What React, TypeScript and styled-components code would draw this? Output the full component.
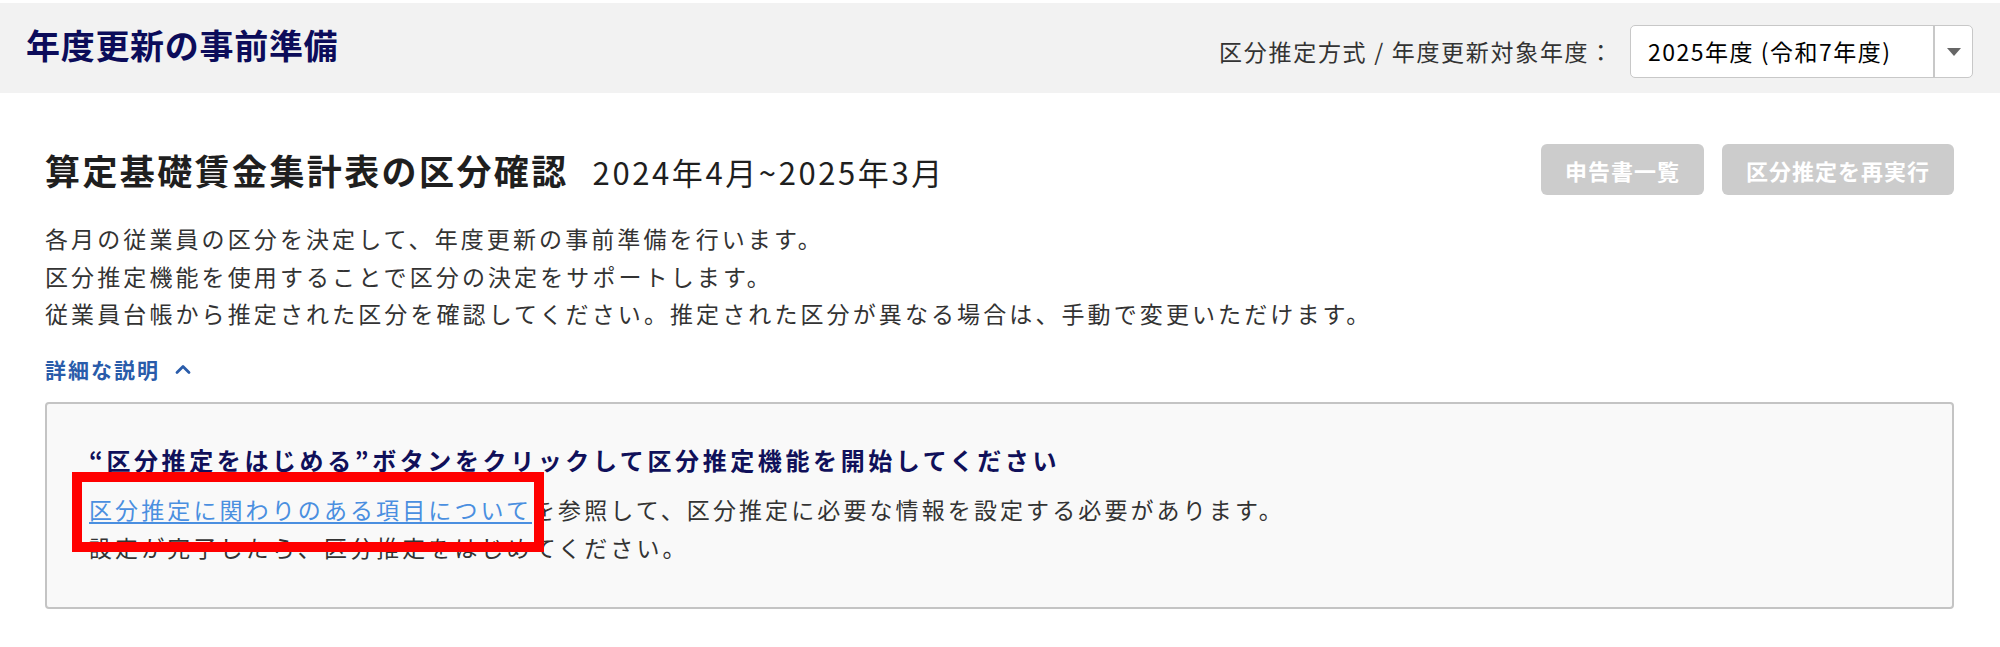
import React from "react";
import styled, { createGlobalStyle } from "styled-components";

const GlobalStyle = createGlobalStyle`
  body {
    margin: 0;
    background: #fff;
    font-family: "Noto Sans CJK JP", "Noto Sans", sans-serif;
    color: #333;
  }
`;

function ChevronUp() {
  return (
    <svg width="16" height="12" viewBox="0 0 16 12">
      <path
        d="M2 9.5 L8 3.5 L14 9.5"
        fill="none"
        stroke="#2a5caa"
        strokeWidth="2.8"
        strokeLinecap="round"
        strokeLinejoin="round"
      />
    </svg>
  );
}

function App() {
  return (
    <>
      <GlobalStyle />
      <StyledPage>
        <Header>
          <PageTitle>年度更新の事前準備</PageTitle>
          <YearControl>
            <YearLabel>区分推定方式 / 年度更新対象年度：</YearLabel>
            <YearSelect>
              <span className="select-value">2025年度 (令和7年度)</span>
              <span className="select-arrow" />
            </YearSelect>
          </YearControl>
        </Header>

        <Main>
          <HeadingRow>
            <SectionTitle>
              算定基礎賃金集計表の区分確認
              <span className="period">2024年4月~2025年3月</span>
            </SectionTitle>
            <ButtonGroup>
              <ActionButton disabled $width={163}>
                申告書一覧
              </ActionButton>
              <ActionButton disabled $width={232}>
                区分推定を再実行
              </ActionButton>
            </ButtonGroup>
          </HeadingRow>

          <Description>
            <p>各月の従業員の区分を決定して、年度更新の事前準備を行います。</p>
            <p>区分推定機能を使用することで区分の決定をサポートします。</p>
            <p>
              従業員台帳から推定された区分を確認してください。推定された区分が異なる場合は、手動で変更いただけます。
            </p>
          </Description>

          <DetailToggle>
            詳細な説明
            <ChevronUp />
          </DetailToggle>

          <InfoBox>
            <InfoTitle>
              “区分推定をはじめる”ボタンをクリックして区分推定機能を開始してください
            </InfoTitle>
            <InfoText>
              <HighlightWrap>
                <a href="#items">区分推定に関わりのある項目について</a>
                <span className="highlight" />
              </HighlightWrap>
              を参照して、区分推定に必要な情報を設定する必要があります。
            </InfoText>
            <InfoText>設定が完了したら、区分推定をはじめてください。</InfoText>
          </InfoBox>
        </Main>
      </StyledPage>
    </>
  );
}

export default App;

const StyledPage = styled.div`
  padding-top: 3px;
`;

const Header = styled.header`
  height: 90px;
  background-color: #f2f2f2;
  display: flex;
  align-items: center;
  justify-content: space-between;
  padding: 0 27px 0 26px;
`;

const PageTitle = styled.h1`
  margin: 0 0 6px 0;
  font-size: 34px;
  font-weight: 700;
  letter-spacing: 0.7px;
  color: #0c0c5a;
  line-height: 1;
`;

const YearControl = styled.div`
  display: flex;
  align-items: center;
  gap: 16px;
  padding-top: 6px;
`;

const YearLabel = styled.span`
  font-size: 23px;
  letter-spacing: 1.7px;
  color: #333;
`;

const YearSelect = styled.div`
  width: 343px;
  height: 53px;
  box-sizing: border-box;
  background: #fff;
  border: 1px solid #c8c8c8;
  border-radius: 5px;
  display: flex;
  align-items: stretch;

  .select-value {
    flex: 1;
    display: flex;
    align-items: center;
    padding-left: 17px;
    font-size: 23px;
    letter-spacing: 1.5px;
    color: #000;
  }
  .select-arrow {
    width: 37px;
    border-left: 2px solid #c8c8c8;
    position: relative;

    &::after {
      content: "";
      position: absolute;
      left: 12px;
      top: 22px;
      border-left: 7px solid transparent;
      border-right: 7px solid transparent;
      border-top: 8px solid #666;
    }
  }
`;

const Main = styled.main`
  padding: 0 46px 0 45px;
`;

const HeadingRow = styled.div`
  margin-top: 51px;
  height: 51px;
  display: flex;
  align-items: center;
  justify-content: space-between;
`;

const SectionTitle = styled.h2`
  margin: 0;
  font-size: 35px;
  font-weight: 700;
  letter-spacing: 2.4px;
  color: #1f1f1f;
  display: flex;
  align-items: baseline;

  .period {
    margin-left: 24px;
    font-size: 31px;
    font-weight: 400;
    letter-spacing: 2.6px;
  }
`;

const ButtonGroup = styled.div`
  display: flex;
  gap: 18px;
`;

const ActionButton = styled.button<{ $width: number }>`
  width: ${(p) => p.$width}px;
  height: 51px;
  border: none;
  border-radius: 6px;
  background-color: #cccccc;
  color: #fff;
  font-family: "Noto Sans CJK JP", sans-serif;
  font-size: 22px;
  font-weight: 700;
  letter-spacing: 1px;
  cursor: default;
`;

const Description = styled.div`
  margin-top: 25px;
  p {
    margin: 0;
    font-size: 23px;
    line-height: 37.5px;
    letter-spacing: 3.1px;
    color: #333;
  }
`;

const DetailToggle = styled.div`
  margin-top: 18px;
  height: 37px;
  display: flex;
  align-items: center;
  gap: 15px;
  font-size: 21px;
  font-weight: 700;
  letter-spacing: 2px;
  color: #2a5caa;
`;

const InfoBox = styled.section`
  margin-top: 14px;
  border: 2px solid #c4c4c4;
  border-radius: 4px;
  background-color: #f9f9f9;
  padding: 36px 42px 41px 42px;
`;

const InfoTitle = styled.div`
  font-size: 24px;
  line-height: 40px;
  font-weight: 700;
  letter-spacing: 3.6px;
  color: #10105a;
  margin-bottom: 10px;
`;

const InfoText = styled.div`
  font-size: 23px;
  line-height: 38px;
  letter-spacing: 3.1px;
  color: #333;
`;

const HighlightWrap = styled.span`
  position: relative;
  display: inline-block;
  line-height: 38px;

  a {
    color: #4a8fe0;
    text-decoration: underline;
    text-underline-offset: 3px;
  }
  .highlight {
    position: absolute;
    left: -17px;
    top: -18px;
    right: -12px;
    bottom: -24px;
    border: 10px solid #ff0000;
    pointer-events: none;
  }
`;
